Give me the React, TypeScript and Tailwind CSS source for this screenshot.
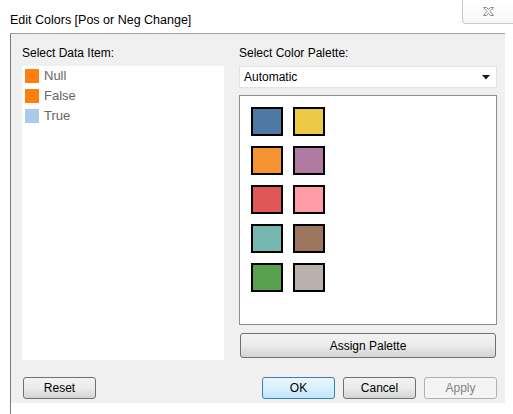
import React from "react";

const items = [
  { label: "Null", color: "#ff7f0e" },
  { label: "False", color: "#ff7f0e" },
  { label: "True", color: "#a7cbe8" },
];

const palette = [
  ["#4e79a7", "#edc948"],
  ["#f59331", "#b07aa1"],
  ["#e15759", "#ff9da7"],
  ["#76b7b2", "#9c755f"],
  ["#59a14f", "#bab0ac"],
];

const btn =
  "h-[22px] w-[73px] rounded-[3px] border text-[12px] flex items-center justify-center";
const normalBtn =
  btn + " border-[#707070] bg-gradient-to-b from-[#f3f3f3] via-[#ebebeb] to-[#d3d3d3] text-black";

export default function App() {
  return (
    <div
      className="w-[513px] h-[414px] bg-white relative overflow-hidden text-[12px] text-black"
      style={{ fontFamily: '"Liberation Sans", Arial, sans-serif' }}
    >
      {/* Title */}
      <div className="h-[33px] pl-[10px] pt-[12px] text-[12.5px] leading-[16px]">
        Edit Colors [Pos or Neg Change]
      </div>

      {/* Close button */}
      <div className="absolute top-0 left-[462px] w-[60px] h-[24px] border-l border-b border-[#c9c9c9] rounded-bl-[4px] bg-gradient-to-b from-white to-[#f7f7f7] flex items-center pl-[19px]">
        <svg width="13" height="11" viewBox="0 0 13 11">
          <path
            d="M1.5 1.5 L4.5 1.5 L6.5 3.6 L8.5 1.5 L11.5 1.5 L8 5.5 L11.5 9.5 L8.5 9.5 L6.5 7.4 L4.5 9.5 L1.5 9.5 L5 5.5 Z"
            fill="none"
            stroke="#8a8a8a"
            strokeWidth="1"
          />
        </svg>
      </div>

      {/* Body */}
      <div className="ml-[10px] w-[495px] h-[370px] bg-[#f0f0f0] border-l border-t border-[#a0a0a0] border-l-[#7a7a7a] flex flex-col pl-[11px] pr-[8px]">
        <div className="flex gap-[15px] pt-[12px]">
          {/* Left */}
          <div className="flex flex-col w-[202px]">
            <div className="h-[20px] leading-[14px]">Select Data Item:</div>
            <div className="bg-white h-[294px] pt-[3px] pl-[3px] flex flex-col gap-[6px]">
              {items.map((it) => (
                <div key={it.label} className="flex items-center gap-[5px] h-[14px]">
                  <div className="w-[14px] h-[14px]" style={{ backgroundColor: it.color }} />
                  <span className="text-[13px] text-[#666666]">{it.label}</span>
                </div>
              ))}
            </div>
          </div>

          {/* Right */}
          <div className="flex flex-col w-[258px]">
            <div className="h-[20px] leading-[14px]">Select Color Palette:</div>
            <div className="h-[22px] bg-white border border-[#e3e3e3] flex items-center justify-between pl-[4px] pr-[6px]">
              <span>Automatic</span>
              <svg width="8" height="5" viewBox="0 0 8 5">
                <path d="M0 0 L8 0 L4 4.5 Z" fill="#1a1a1a" />
              </svg>
            </div>
            <div className="mt-[7px] h-[230px] bg-white border border-[#8c8c9a] pt-[11px] pl-[11px] flex flex-col gap-[10px]">
              {palette.map((row, i) => (
                <div key={i} className="flex gap-[10px]">
                  {row.map((c) => (
                    <div
                      key={c}
                      className="w-[32px] h-[29px] border-2 border-black"
                      style={{ backgroundColor: c }}
                    />
                  ))}
                </div>
              ))}
            </div>
            <div className="mt-[8px] h-[25px] w-[256px] ml-[1px] rounded-[3px] border border-[#707070] bg-gradient-to-b from-[#f3f3f3] via-[#ebebeb] to-[#d3d3d3] flex items-center justify-center">
              Assign Palette
            </div>
          </div>
        </div>

        {/* Bottom buttons */}
        <div className="flex items-center mt-[17px] pl-[1px]">
          <div className={normalBtn}>Reset</div>
          <div className="flex-1" />
          <div className={btn + " border-[#3c7fb1] bg-gradient-to-b from-[#eaf6fd] via-[#d9f0fc] to-[#bee6fd] text-black"}>
            OK
          </div>
          <div className={normalBtn + " ml-[8px]"}>Cancel</div>
          <div className={btn + " ml-[8px] border-[#adb2b5] bg-[#f4f4f4] text-[#838383]"}>Apply</div>
        </div>
      </div>

      {/* Left border continues to bottom */}
      <div className="absolute left-[10px] top-[403px] w-px h-[11px] bg-[#7a7a7a]" />
    </div>
  );
}
